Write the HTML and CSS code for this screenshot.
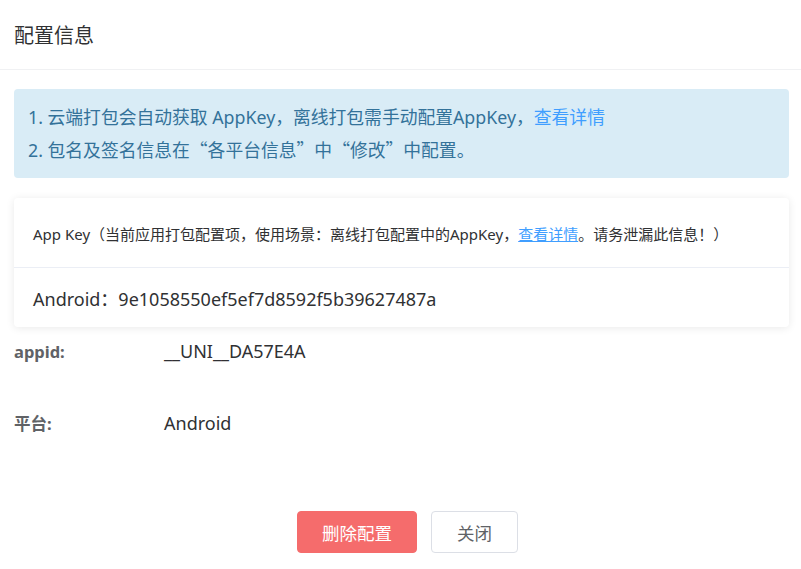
FILE: index.html
```html
<!DOCTYPE html>
<html lang="zh-CN">
<head>
<meta charset="utf-8">
<title>配置信息</title>
<link rel="stylesheet" href="styles.css">
</head>
<body>
<div class="dialog">
  <div class="dialog-header">
    <span class="dialog-title">配置信息</span>
  </div>
  <div class="dialog-body">
    <div class="alert">
      <p class="alert-line">1. 云端打包会自动获取 AppKey，离线打包需手动配置AppKey，<a class="alert-link" href="#">查看详情</a></p>
      <p class="alert-line">2. 包名及签名信息在<span class="cjk">“</span>各平台信息<span class="cjk">”</span>中<span class="cjk">“</span>修改<span class="cjk">”</span>中配置。</p>
    </div>
    <div class="card">
      <div class="card-header">App Key（当前应用打包配置项，使用场景：离线打包配置中的AppKey，<a class="card-link" href="#">查看详情</a>。请务泄漏此信息！）</div>
      <div class="card-body">Android：9e1058550ef5ef7d8592f5b39627487a</div>
    </div>
    <div class="form">
      <div class="form-row">
        <span class="form-label">appid:</span>
        <span class="form-value">__UNI__DA57E4A</span>
      </div>
      <div class="form-row">
        <span class="form-label">平台:</span>
        <span class="form-value">Android</span>
      </div>
    </div>
  </div>
  <div class="dialog-footer">
    <button class="btn btn-danger" type="button">删除配置</button>
    <button class="btn btn-default" type="button">关闭</button>
  </div>
</div>
</body>
</html>
```

FILE: styles.css
```css
* { box-sizing: border-box; }
html, body {
  margin: 0;
  padding: 0;
  background: #ffffff;
}
body {
  font-family: "Noto Sans", "Noto Sans CJK SC", sans-serif;
  color: #303133;
}
.cjk {
  font-family: "Noto Sans CJK SC", sans-serif;
}
.dialog {
  width: 801px;
  height: 569px;
  display: flex;
  flex-direction: column;
}
.dialog-header {
  height: 70px;
  border-bottom: 1px solid #f0f1f3;
  padding-left: 14px;
  display: flex;
  align-items: center;
}
.dialog-title {
  font-size: 20px;
  color: #303133;
  line-height: 1;
  margin-top: 3px;
}
.dialog-body {
  padding: 19px 12px 0 14px;
}
.alert {
  background: #d9ecf6;
  border-radius: 4px;
  padding: 12px 14px;
  color: #33729a;
}
.alert-line {
  margin: 0;
  font-size: 17.8px;
  line-height: 32px;
}
.alert-link {
  color: #409eff;
  text-decoration: none;
}
.card {
  margin-top: 20px;
  background: #fff;
  border-radius: 4px;
  box-shadow: 0 1px 8px rgba(0, 0, 0, 0.09);
}
.card-header {
  height: 70px;
  border-bottom: 1px solid #ebeef5;
  padding: 1px 19px 0;
  display: flex;
  align-items: center;
  font-size: 15px;
  color: #303133;
}
.card-link {
  color: #409eff;
  text-decoration: underline;
}
.card-body {
  height: 59px;
  padding: 0 19px;
  display: flex;
  align-items: center;
  font-size: 18px;
  color: #303133;
}
.form {
  display: flex;
  flex-direction: column;
}
.form-row {
  display: flex;
  align-items: center;
  height: 48px;
}
.form-row + .form-row {
  margin-top: 24px;
}
.form-label {
  width: 150px;
  font-size: 16.5px;
  font-weight: bold;
  color: #606266;
}
.form-value {
  font-size: 18px;
  color: #303133;
}
.dialog-footer {
  margin-top: auto;
  padding: 0 0 16px 14px;
  display: flex;
  justify-content: center;
  gap: 14px;
}
.btn {
  height: 42px;
  border-radius: 4px;
  font-family: "Noto Sans", "Noto Sans CJK SC", sans-serif;
  font-size: 17.5px;
  cursor: pointer;
}
.btn-danger {
  width: 120px;
  background: #f56c6c;
  border: 1px solid #f56c6c;
  color: #fff;
}
.btn-default {
  width: 87px;
  background: #fff;
  border: 1px solid #dcdfe6;
  color: #606266;
}
```
